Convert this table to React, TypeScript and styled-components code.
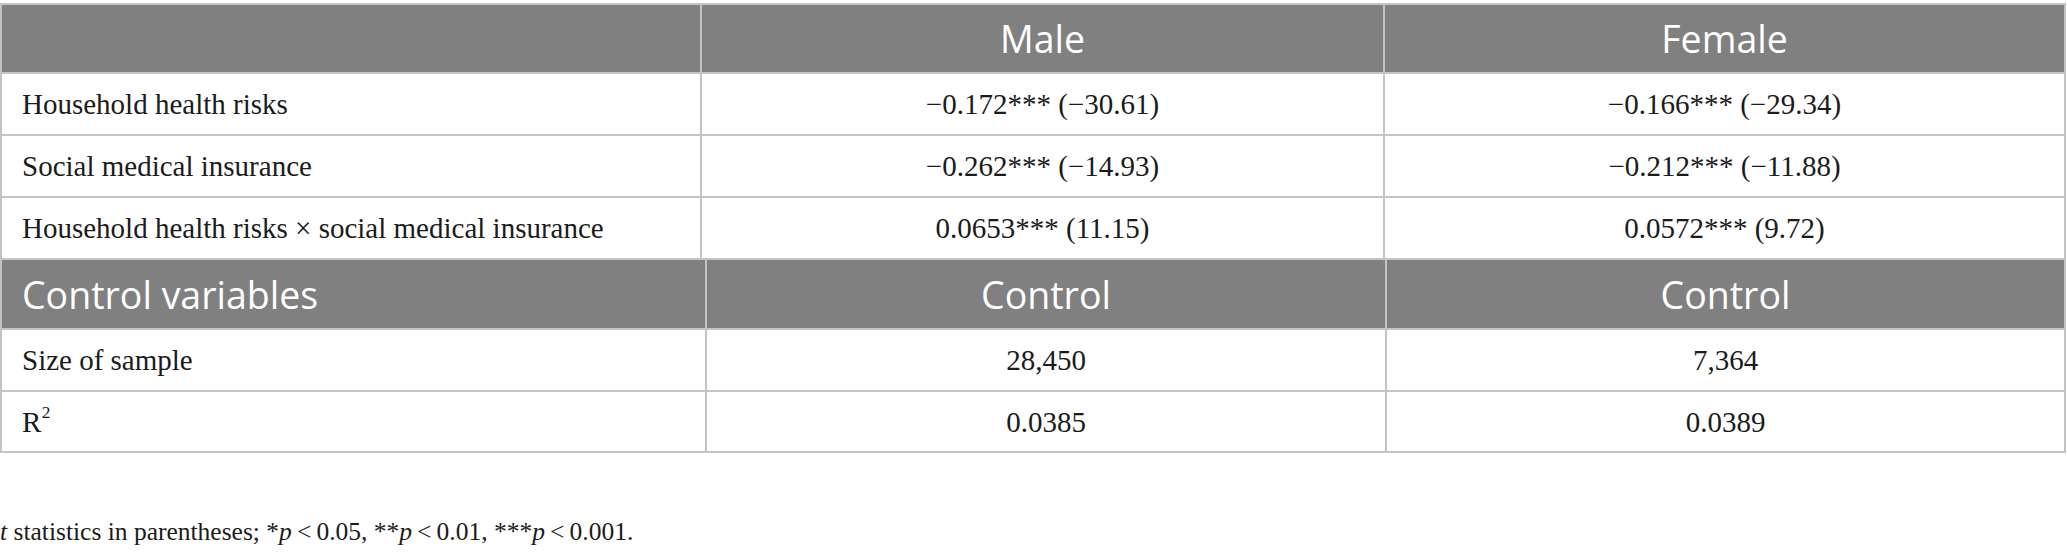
import React from "react";
import styled, { createGlobalStyle } from "styled-components";

const GlobalStyle = createGlobalStyle`
  html, body {
    margin: 0;
    padding: 0;
    background: #ffffff;
  }
  body {
    font-family: "Liberation Serif", "Times New Roman", serif;
    color: #1b1b1b;
  }
`;

const LINE = "#c4c4c4";

const Page = styled.div`
  width: 2067px;
  padding-top: 3px;
  box-sizing: border-box;
`;

const Table = styled.div<{ $top?: boolean }>`
  width: 2066px;
  box-sizing: border-box;
  border-left: 2px solid ${LINE};
  border-right: 2px solid ${LINE};
  border-top: ${(p) => (p.$top ? `2px solid ${LINE}` : "none")};
  display: flex;
  flex-direction: column;
`;

const Row = styled.div<{ $cols: string; $h: number; $head?: boolean }>`
  display: grid;
  grid-template-columns: ${(p) => p.$cols};
  height: ${(p) => p.$h}px;
  box-sizing: border-box;
  border-bottom: 2px solid ${LINE};
  background: ${(p) => (p.$head ? "#808080" : "#ffffff")};
`;

const Cell = styled.div<{ $center?: boolean; $divider?: boolean; $head?: boolean }>`
  display: flex;
  align-items: center;
  justify-content: ${(p) => (p.$center ? "center" : "flex-start")};
  padding: 0 20px;
  box-sizing: border-box;
  border-left: ${(p) => (p.$divider ? `2px solid ${LINE}` : "none")};
  white-space: nowrap;
  font-family: ${(p) =>
    p.$head ? `"Open Sans", "Noto Sans", sans-serif` : `"Liberation Serif", "Times New Roman", serif`};
  font-size: ${(p) => (p.$head ? "37.5px" : "29px")};
  color: ${(p) => (p.$head ? "#ffffff" : "#1b1b1b")};
  padding-top: ${(p) => (p.$head ? "0" : "1px")};
`;

const Sup = styled.span`
  display: inline-block;
  font-size: 0.6em;
  line-height: 1;
  transform: translate(0.5px, -0.5em);
`;

const Footnote = styled.p`
  margin: 64px 0 0 0;
  font-family: "Liberation Serif", "Times New Roman", serif;
  font-size: 25.5px;
  color: #1b1b1b;
  white-space: nowrap;
`;

const Em = styled.i`
  font-style: italic;
`;

type Line = { label: React.ReactNode; male: string; female: string };

const topRows: Line[] = [
  { label: "Household health risks", male: "\u22120.172*** (\u221230.61)", female: "\u22120.166*** (\u221229.34)" },
  { label: "Social medical insurance", male: "\u22120.262*** (\u221214.93)", female: "\u22120.212*** (\u221211.88)" },
  {
    label: "Household health risks \u00d7 social medical insurance",
    male: "0.0653*** (11.15)",
    female: "0.0572*** (9.72)",
  },
];

const bottomRows: (Line & { h: number })[] = [
  { label: "Size of sample", male: "28,450", female: "7,364", h: 62 },
  {
    label: (
      <>
        R<Sup>2</Sup>
      </>
    ),
    male: "0.0385",
    female: "0.0389",
    h: 61,
  },
];

const COLS_TOP = "698px 683px 1fr";
const COLS_BOTTOM = "703px 680px 1fr";

export default function App() {
  return (
    <>
      <GlobalStyle />
      <Page>
        <Table $top>
          <Row $cols={COLS_TOP} $h={69} $head>
            <Cell $head />
            <Cell $head $center $divider>
              Male
            </Cell>
            <Cell $head $center $divider>
              Female
            </Cell>
          </Row>
          {topRows.map((r, i) => (
            <Row key={i} $cols={COLS_TOP} $h={62}>
              <Cell>{r.label}</Cell>
              <Cell $center $divider>
                {r.male}
              </Cell>
              <Cell $center $divider>
                {r.female}
              </Cell>
            </Row>
          ))}
        </Table>
        <Table>
          <Row $cols={COLS_BOTTOM} $h={70} $head>
            <Cell $head>Control variables</Cell>
            <Cell $head $center $divider>
              Control
            </Cell>
            <Cell $head $center $divider>
              Control
            </Cell>
          </Row>
          {bottomRows.map((r, i) => (
            <Row key={i} $cols={COLS_BOTTOM} $h={r.h}>
              <Cell>{r.label}</Cell>
              <Cell $center $divider>
                {r.male}
              </Cell>
              <Cell $center $divider>
                {r.female}
              </Cell>
            </Row>
          ))}
        </Table>
        <Footnote>
          <Em>t</Em> statistics in parentheses; *<Em>p</Em>{"\u2009<\u2009"}0.05, **<Em>p</Em>
          {"\u2009<\u2009"}0.01, ***<Em>p</Em>
          {"\u2009<\u2009"}0.001.
        </Footnote>
      </Page>
    </>
  );
}
